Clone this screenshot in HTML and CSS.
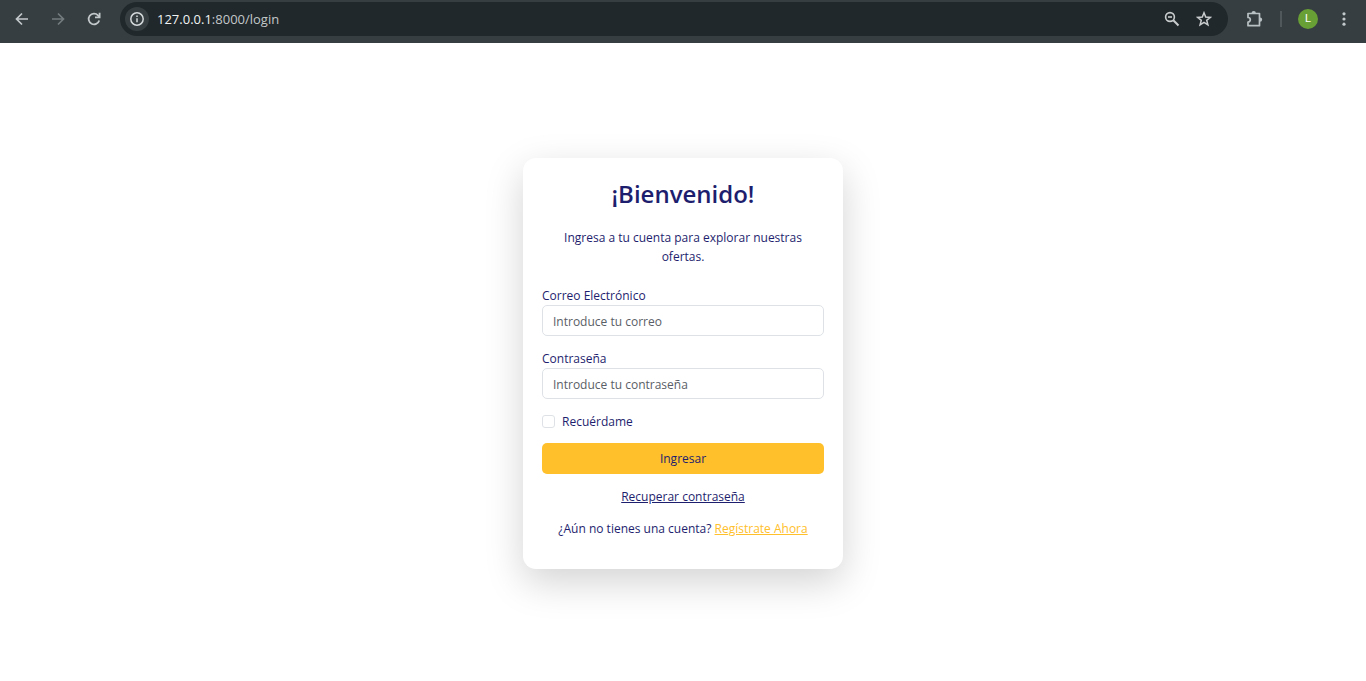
FILE: index.html
```html
<!DOCTYPE html>
<html lang="es">
<head>
<meta charset="utf-8">
<title>Login</title>
<link rel="stylesheet" href="styles.css">
</head>
<body>
<header class="toolbar">
  <button class="tool" type="button" aria-label="Atrás"><svg width="16" height="16" viewBox="0 0 16 16" fill="none" stroke="#c3c9cb" stroke-width="1.7"><path d="M14 8H3M8 2.5 2.5 8 8 13.5"/></svg></button>
  <button class="tool" type="button" aria-label="Adelante" disabled><svg width="16" height="16" viewBox="0 0 16 16" fill="none" stroke="#747b7e" stroke-width="1.7"><path d="M2 8h11M8 2.5 13.5 8 8 13.5"/></svg></button>
  <button class="tool" type="button" aria-label="Recargar"><svg width="16" height="16" viewBox="0 0 16 16" fill="none" stroke="#c3c9cb" stroke-width="1.8"><path d="M13.2 9.500A5.400 5.400 0 1 1 12 4.300L13.500 6"/><path d="M13.600 1.800V6.400H9"/></svg></button>
  <div class="address">
    <button class="site-info" type="button" aria-label="Información del sitio"><svg width="16" height="16" viewBox="0 0 16 16" fill="none" stroke="#d5dadb" stroke-width="1.5"><circle cx="8" cy="8" r="6.2"/><path d="M8 7.300v4M8 4.500v1.600"/></svg></button>
    <span class="url"><span class="host">127.0.0.1</span>:8000/login</span>
    <button class="tool" type="button" aria-label="Zoom"><svg width="16" height="16" viewBox="0 0 16 16" fill="none" stroke="#c9cccd" stroke-width="1.6"><circle cx="6" cy="6" r="4.4"/><path d="M4 6h4"/><path d="m9.300 9.300 5.200 5.200" stroke-width="2"/></svg></button>
    <button class="tool" type="button" aria-label="Favoritos"><svg width="16" height="16" viewBox="0 0 16 16" fill="none" stroke="#c9cccd" stroke-width="1.5"><path d="m8 1.800 1.700 4.300 4.600.3-3.600 2.900 1.200 4.500L8 11.300l-3.900 2.500 1.200-4.500L1.700 6.400l4.600-.3z"/></svg></button>
  </div>
  <div class="actions">
    <button class="tool" type="button" aria-label="Extensiones"><svg width="18" height="18" viewBox="0 0 18 18" fill="none" stroke="#b9c1c4" stroke-width="1.7" stroke-linejoin="round"><path d="M2 3.500h11.500v12.200H2v-3.600a2.300 2.300 0 0 0 0-4.600z"/><path fill="#b9c1c4" stroke="none" d="M5.500 3.200a2.200 2.200 0 0 1 4.400 0zM14 7.400a2.200 2.200 0 0 1 0 4.400z"/></svg></button>
    <span class="divider"></span>
    <button class="avatar" type="button" aria-label="Perfil">L</button>
    <button class="tool menu" type="button" aria-label="Menú"><svg width="16" height="16" viewBox="0 0 16 16" fill="#c3c9cb"><circle cx="8" cy="2.8" r="1.6"/><circle cx="8" cy="8" r="1.6"/><circle cx="8" cy="13.2" r="1.6"/></svg></button>
  </div>
</header>
<main class="page">
  <form class="card">
    <h1 class="title">¡Bienvenido!</h1>
    <p class="intro">Ingresa a tu cuenta para explorar nuestras ofertas.</p>
    <div class="field">
      <label for="email">Correo Electrónico</label>
      <input class="control" id="email" type="email" placeholder="Introduce tu correo">
    </div>
    <div class="field">
      <label for="password">Contraseña</label>
      <input class="control" id="password" type="password" placeholder="Introduce tu contraseña">
    </div>
    <div class="remember">
      <input class="check" id="remember" type="checkbox">
      <label for="remember">Recuérdame</label>
    </div>
    <button class="submit" type="submit">Ingresar</button>
    <p class="links"><a class="recover" href="#">Recuperar contraseña</a></p>
    <p class="links">¿Aún no tienes una cuenta? <a class="register" href="#">Regístrate Ahora</a></p>
  </form>
</main>
</body>
</html>
```
FILE: styles.css
```css
* { box-sizing: border-box; }
body {
  margin: 0;
  min-height: 100vh;
  display: flex;
  flex-direction: column;
  background: #fff;
  color: #1e1e6e;
  font: 12px/19px "Segoe UI", "Open Sans", "Noto Sans", sans-serif;
}
button, input { font: inherit; color: inherit; }
button { border: 0; padding: 0; background: none; }
p, h1 { margin: 0; }

.toolbar {
  display: flex;
  align-items: center;
  height: 43px;
  padding: 0 12px 5px 4px;
  background: #363e41;
}
.tool {
  display: flex;
  align-items: center;
  justify-content: center;
  width: 36px;
  height: 32px;
}
.address {
  flex: 1;
  display: flex;
  align-items: center;
  height: 34px;
  margin-left: 8px;
  padding: 0 8px 0 5px;
  border-radius: 17px;
  background: #20282b;
  color: #c3c7c9;
}
.address .tool { width: 32px; }
.site-info {
  display: flex;
  align-items: center;
  justify-content: center;
  width: 24px;
  height: 24px;
  border-radius: 50%;
  background: #363e41;
}
.url { flex: 1; margin-left: 8px; font-size: 13px; }
.host { color: #f1f3f3; }
.actions { display: flex; align-items: center; margin-left: 9px; }
.divider { width: 2px; height: 16px; margin-left: 7px; background: #50585b; }
.avatar {
  width: 20px;
  height: 20px;
  margin: 0 10px 0 16px;
  border-radius: 50%;
  background: #69a035;
  color: #fff;
  font: 11px/20px Roboto, sans-serif;
}
.menu { width: 32px; margin-right: -6px; }

.page {
  flex: 1;
  display: flex;
  align-items: center;
  justify-content: center;
  padding: 19px 16px 16px;
}
.card {
  width: 320px;
  padding: 20px 19px 31px;
  border-radius: 13px;
  background: #fff;
  box-shadow: 0 13px 38px rgba(0, 0, 0, .175);
}
.title {
  margin-bottom: 19px;
  font-size: 24px;
  font-weight: 600;
  line-height: 31px;
  text-align: center;
}
.intro { margin-bottom: 20px; padding: 0 16px; text-align: center; }
.field { margin-bottom: 13px; }
.field label { display: block; }
.control {
  display: block;
  width: 100%;
  height: 31px;
  padding: 1px 10px 0;
  border: 1px solid #dee2e6;
  border-radius: 5px;
  background: #fff;
}
.control::placeholder { color: #5a5e66; opacity: 1; }
.remember { display: flex; align-items: center; gap: 7px; margin-bottom: 12px; }
.check {
  appearance: none;
  width: 13px;
  height: 13px;
  margin: 0;
  border: 1px solid #dee2e6;
  border-radius: 3px;
}
.check:checked { background: #1e1e6e; }
.submit {
  display: block;
  width: 100%;
  height: 31px;
  border-radius: 5px;
  background: #ffc02b;
}
.links { margin-top: 13px; text-align: center; }
.recover { color: #1e1e6e; }
.register { color: #ffc02b; }
```
